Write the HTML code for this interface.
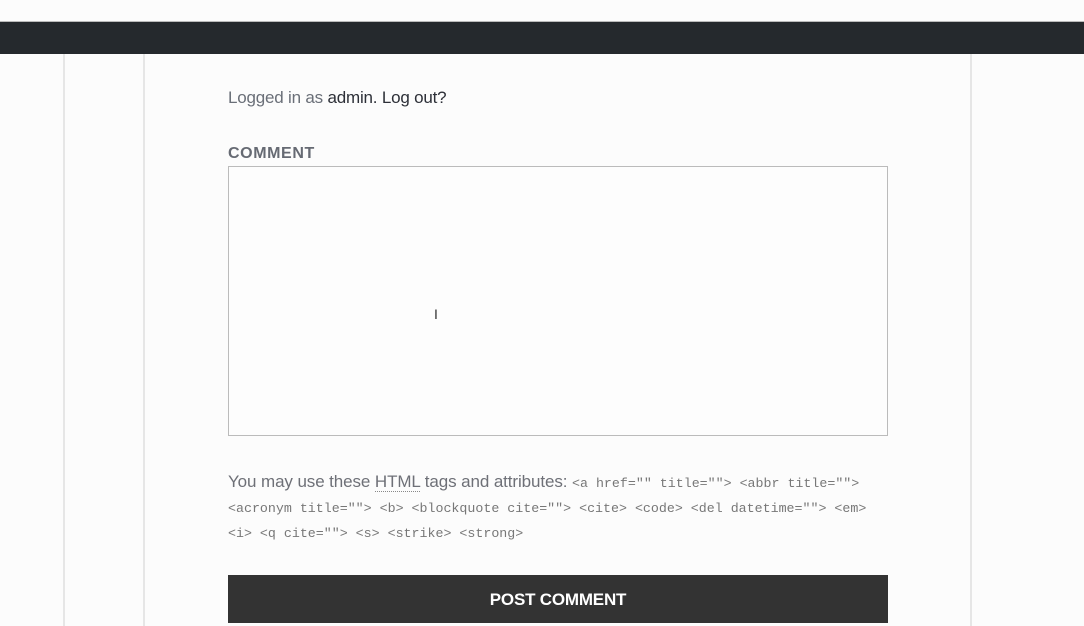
<html><head><style>
body{margin:0;width:1084px;height:626px;background:#fcfcfc;position:relative;overflow:hidden;font-family:"Liberation Sans",sans-serif}
.bar{position:absolute;left:0;top:21px;width:1084px;height:33px;background:#25292d;border-top:1px solid #bbb;box-sizing:border-box}
.vl{position:absolute;top:54px;bottom:0;width:2px;background:#e6e6e6}
.t{position:absolute;left:228px;}
</style></head><body>
<div class="bar"></div>
<div class="vl" style="left:63px"></div>
<div class="vl" style="left:143px"></div>
<div class="vl" style="left:970px"></div>
<div class="t" style="top:88px;font-size:17px;color:#6a6f78;letter-spacing:-0.2px">Logged in as <span style="color:#2d3038">admin. Log out?</span></div>
<div class="t" style="top:145px;font-size:16px;font-weight:bold;color:#666a73;letter-spacing:0.6px">COMMENT</div>
<div style="position:absolute;left:228px;top:166px;width:660px;height:270px;border:1px solid #bbb;box-sizing:border-box;background:#fdfdfd"></div>
<div style="position:absolute;left:434px;top:306px;font-size:14px;color:#333">I</div>
<div class="t" style="top:469px;width:660px;line-height:25px;font-size:17px;color:#6e7077;letter-spacing:-0.1px">You may use these <span style="border-bottom:1px dotted #888">HTML</span> tags and attributes: <span style="font-family:'Liberation Mono',monospace;font-size:13.3px;color:#777;letter-spacing:0">&lt;a href="" title=""&gt; &lt;abbr title=""&gt; &lt;acronym title=""&gt; &lt;b&gt; &lt;blockquote cite=""&gt; &lt;cite&gt; &lt;code&gt; &lt;del datetime=""&gt; &lt;em&gt; &lt;i&gt; &lt;q cite=""&gt; &lt;s&gt; &lt;strike&gt; &lt;strong&gt;</span></div>
<div style="position:absolute;left:228px;top:575px;width:660px;height:48px;background:#333;color:#fff;font-weight:bold;font-size:17px;text-align:center;line-height:50px;letter-spacing:-0.2px">POST COMMENT</div>
</body></html>
